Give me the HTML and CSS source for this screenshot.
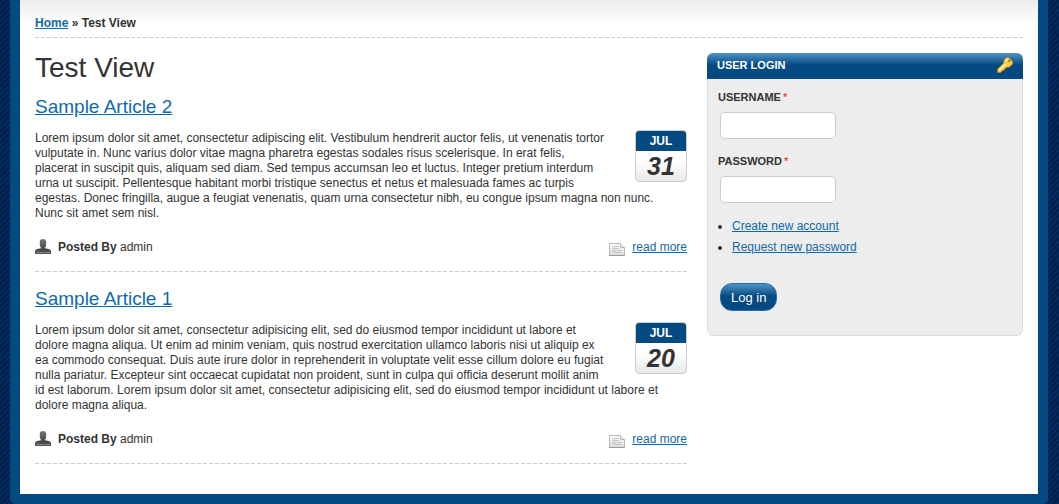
FILE: index.html
```html
<!DOCTYPE html>
<html lang="en">
<head>
<meta charset="utf-8">
<title>Test View</title>
<link rel="stylesheet" href="styles.css">
</head>
<body>
<div class="page">
  <nav class="breadcrumb" aria-label="Breadcrumb"><a href="#">Home</a> » Test View</nav>
  <div class="columns">
    <main class="content">
      <h1>Test View</h1>
      <article class="node">
        <h2><a href="#">Sample Article 2</a></h2>
        <div class="body">
          <time class="date" datetime="07-31"><span class="month">JUL</span><span class="day">31</span></time>
          <p>Lorem ipsum dolor sit amet, consectetur adipiscing elit. Vestibulum hendrerit auctor felis, ut venenatis tortor<br>
          vulputate in. Nunc varius dolor vitae magna pharetra egestas sodales risus scelerisque. In erat felis,<br>
          placerat in suscipit quis, aliquam sed diam. Sed tempus accumsan leo et luctus. Integer pretium interdum<br>
          urna ut suscipit. Pellentesque habitant morbi tristique senectus et netus et malesuada fames ac turpis<br>
          egestas. Donec fringilla, augue a feugiat venenatis, quam urna consectetur nibh, eu congue ipsum magna non nunc.<br>
          Nunc sit amet sem nisl.</p>
        </div>
        <footer class="meta">
          <svg class="user" viewBox="0 0 16 15" aria-hidden="true"><use href="#user"/></svg>
          <span class="author"><b>Posted By</b> admin</span>
          <svg class="doc" viewBox="0 0 16 13" aria-hidden="true"><use href="#doc"/></svg>
          <a href="#">read more</a>
        </footer>
      </article>
      <article class="node">
        <h2><a href="#">Sample Article 1</a></h2>
        <div class="body">
          <time class="date" datetime="07-20"><span class="month">JUL</span><span class="day">20</span></time>
          <p>Lorem ipsum dolor sit amet, consectetur adipisicing elit, sed do eiusmod tempor incididunt ut labore et<br>
          dolore magna aliqua. Ut enim ad minim veniam, quis nostrud exercitation ullamco laboris nisi ut aliquip ex<br>
          ea commodo consequat. Duis aute irure dolor in reprehenderit in voluptate velit esse cillum dolore eu fugiat<br>
          nulla pariatur. Excepteur sint occaecat cupidatat non proident, sunt in culpa qui officia deserunt mollit anim<br>
          id est laborum. Lorem ipsum dolor sit amet, consectetur adipisicing elit, sed do eiusmod tempor incididunt ut labore et<br>
          dolore magna aliqua.</p>
        </div>
        <footer class="meta">
          <svg class="user" viewBox="0 0 16 15" aria-hidden="true"><use href="#user"/></svg>
          <span class="author"><b>Posted By</b> admin</span>
          <svg class="doc" viewBox="0 0 16 13" aria-hidden="true"><use href="#doc"/></svg>
          <a href="#">read more</a>
        </footer>
      </article>
    </main>
    <aside class="block">
      <h2 class="block-title">USER LOGIN
        <svg class="key" viewBox="0 0 16 16" aria-hidden="true">
          <path d="M7.500 2.500 9.500.7H11.500L15.400 4.500V7L12.500 10H9.500L8.500 11.500H7.500V13H6L5 14L4 15.300H.7V12L6.500 6.500z" fill="#fbd54a" stroke="#d08a20"/>
          <path d="M2 13.500 8.500 7M8.500 4l2-2" stroke="#fff4a8" stroke-width="1.500" fill="none"/>
          <path d="M11.500 3.200l1.500 1.500" stroke="#a86a10" stroke-width="2"/>
        </svg>
      </h2>
      <form class="login">
        <label for="name">USERNAME<span class="required">*</span></label>
        <input id="name" type="text" required>
        <label for="pass">PASSWORD<span class="required">*</span></label>
        <input id="pass" type="password" required>
        <ul>
          <li><a href="#">Create new account</a></li>
          <li><a href="#">Request new password</a></li>
        </ul>
        <button type="submit">Log in</button>
      </form>
    </aside>
  </div>
</div>
<svg class="symbols" aria-hidden="true">
  <defs>
    <linearGradient id="grey" x2="0" y2="1"><stop stop-color="#777"/><stop offset=".7" stop-color="#484848"/><stop offset="1" stop-color="#555"/></linearGradient>
    <linearGradient id="paper" x2="0" y2="1"><stop stop-color="#fff"/><stop offset="1" stop-color="#ddd"/></linearGradient>
  </defs>
  <symbol id="user" viewBox="0 0 16 15">
    <path d="M4.800 2.500Q5 0 8 0t3.200 2.500v3Q11 8 10 8.500v.8l4 .7q2 .5 2 2.500V15H0v-2.500Q0 10.500 2 10l4-.7v-.8Q5 8 4.800 5.500z" fill="url(#grey)"/>
    <path d="M1 13.500h14" stroke="#858585"/>
  </symbol>
  <symbol id="doc" viewBox="0 0 16 13">
    <path d="M.5.500h11l4 4v8H.5z" fill="url(#paper)" stroke="#bbb"/>
    <path d="M11.500.500v4h4" fill="#eee" stroke="#bbb"/>
    <path d="M3 3.500h7M3 5.500h7M3 7.500h10M3 9.500h10" stroke="#c4c4c4"/>
    <path d="M0 12.500h16" stroke="#999"/>
  </symbol>
</svg>
</body>
</html>
```

FILE: styles.css
```css
* { box-sizing: border-box; }
body {
  margin: 0;
  padding: 0 11px 0 10px;
  color: #333;
  font: 12px/15px "Liberation Sans", Arial, sans-serif;
  background: #002454 repeating-linear-gradient(135deg, #001e4a 0 2px, #002c60 2px 4px);
}
a { color: #0f69a9; }
.page {
  border: solid #044a80;
  border-width: 0 10px 10px;
  border-radius: 0 0 6px 6px;
  padding: 0 15px 30px;
  background: linear-gradient(#ebebeb, #fff 24px);
}
.breadcrumb { padding: 16px 0 7px; font-weight: bold; }
.breadcrumb, .node {
  background: repeating-linear-gradient(90deg, #ccc 0 4px, transparent 4px 6px) bottom / 100% 1px no-repeat;
}
.columns { display: grid; grid-template-columns: 652fr 316fr; gap: 20px; align-items: start; }
h1, h2, p, ul { margin: 0; }
h1 { padding: 14px 0 11px; font-size: 28px; line-height: 32px; font-weight: normal; }
.node { padding-bottom: 17px; margin-bottom: 15px; }
.node:last-child { margin-bottom: 0; }
.node h2 { font-size: 19px; line-height: 24px; font-weight: normal; }
.body { padding: 11px 0 19px; }
.body p { padding-top: 1px; }
.date {
  float: right;
  width: 52px;
  height: 52px;
  margin: 0 0 5px 10px;
  border: 1px solid #ccc;
  border-radius: 4px;
  overflow: hidden;
  text-align: center;
  font-weight: bold;
  background: linear-gradient(#fff 60%, #e8e8e8);
}
.month { display: block; line-height: 20px; color: #fff; background: #044a80; }
.day { display: block; font-size: 25px; line-height: 30px; font-style: italic; }
.meta { display: flex; align-items: center; gap: 7px; height: 15px; }
.user { width: 16px; height: 15px; margin-bottom: 3px; }
.doc { width: 16px; height: 13px; margin-top: 3px; }
.author { flex: 1; }
.block { margin-top: 15px; border-radius: 6px; overflow: hidden; }
.block-title {
  display: flex;
  justify-content: space-between;
  align-items: center;
  height: 26px;
  padding: 0 10px 2px;
  color: #fff;
  font-size: 11px;
  background: linear-gradient(#5293c6, #044a80 12px);
}
.key { width: 16px; height: 16px; }
.login {
  padding: 11px 12px 24px;
  border: 1px solid #ddd;
  border-top: 0;
  border-radius: 0 0 6px 6px;
  background: #ededed;
}
label { display: block; margin-left: -2px; font-size: 11px; font-weight: bold; }
.required { margin-left: 2px; color: #f00; font-weight: normal; }
input {
  display: block;
  width: 116px;
  height: 27px;
  margin: 7px 0 15px;
  padding: 4px;
  border: 1px solid #ccc;
  border-radius: 5px;
  background: #fff;
}
ul { margin-top: -2px; padding-left: 12px; line-height: 21px; }
button {
  display: block;
  height: 28px;
  margin-top: 25px;
  padding: 0 10px;
  border: 1px solid #1c6fb0;
  border-radius: 12px;
  color: #fff;
  font: 13px "Liberation Sans", Arial, sans-serif;
  background: linear-gradient(#5293c6, #044a80 12px);
}
.symbols { position: absolute; width: 0; height: 0; }
```
